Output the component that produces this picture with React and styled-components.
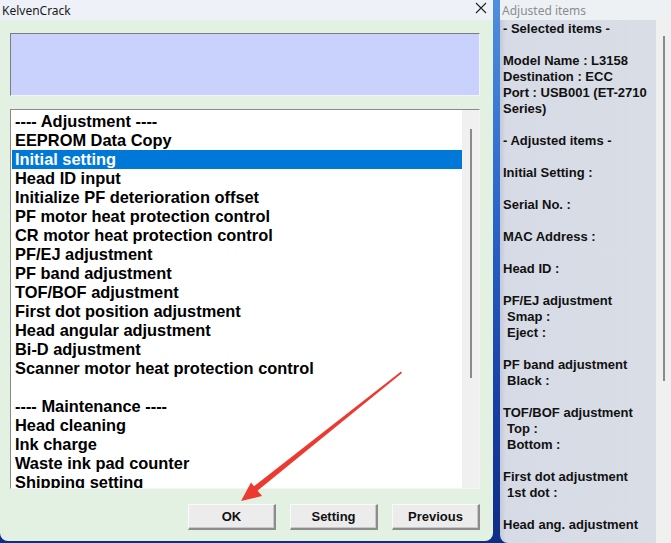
import React from 'react';
import styled, { createGlobalStyle } from 'styled-components';

const GlobalStyle = createGlobalStyle`
    html, body {
        margin: 0;
        padding: 0;
        overflow: hidden;
    }
    body {
        font-family: "Liberation Sans", Arial, sans-serif;
    }
`;

const Desktop = styled.div`
    position: relative;
    width: 671px;
    height: 543px;
    display: flex;
    overflow: hidden;
    background: linear-gradient(180deg, #4f8fdc 0%, #2a64c9 40%, #173fa3 75%, #0d2d86 100%);
`;

const Window = styled.div`
    width: 493px;
    height: 541px;
    display: flex;
    flex-direction: column;
    background-color: #e3f1e3;
    border-radius: 0 0 8px 8px;
    overflow: hidden;
`;

const TitleBar = styled.div`
    height: 20px;
    flex: none;
    display: flex;
    align-items: center;
    justify-content: space-between;
    padding: 0 6px 0 2px;
    background-color: ${p => p.$bg || '#eef2f8'};
    color: ${p => p.$color || '#1a1a1a'};
    font-family: "Noto Sans", "Liberation Sans", sans-serif;
    font-size: 12px;
`;

const CloseIcon = styled.svg`
    width: 12px;
    height: 12px;
    margin-top: -4px;
`;

const WindowBody = styled.div`
    display: flex;
    flex-direction: column;
    padding: 13px 13px 0 10px;
`;

const Display = styled.div`
    height: 61px;
    background-color: #c8d2fc;
    border-top: 1px solid #7c7c7c;
    border-left: 1px solid #7c7c7c;
    border-right: 1px solid #f4f4f4;
    border-bottom: 1px solid #f4f4f4;
`;

const ListBox = styled.div`
    margin-top: 13px;
    height: 378px;
    display: flex;
    background-color: #fff;
    border-top: 1px solid #8a8a8a;
    border-left: 1px solid #8a8a8a;
    border-right: 1px solid #f4f4f4;
    border-bottom: 1px solid #f4f4f4;
    overflow: hidden;
`;

const Items = styled.ul`
    flex: 1;
    margin: 0;
    padding: 2px 0 0 1px;
    list-style: none;
`;

const Item = styled.li`
    height: 19px;
    line-height: 19px;
    padding-left: 3px;
    font-size: 16.4px;
    font-weight: 700;
    white-space: nowrap;
    color: ${p => (p.$selected ? '#ffffff' : '#000000')};
    background-color: ${p => (p.$selected ? '#0078d7' : 'transparent')};
`;

const ScrollTrack = styled.div`
    width: 17px;
    flex: none;
    display: flex;
    justify-content: center;
    padding-top: 19px;
    background-color: #f0f0f0;
`;

const ScrollThumb = styled.div`
    width: 2px;
    height: ${p => p.$h}px;
    background-color: #8a8a8a;
`;

const ButtonRow = styled.div`
    display: flex;
    justify-content: flex-end;
    gap: 14px;
    margin-top: 15px;
`;

const Button = styled.button`
    width: 88px;
    height: 26px;
    padding: 0;
    font-family: "Liberation Sans", Arial, sans-serif;
    font-size: 13px;
    font-weight: 700;
    color: #111;
    background-color: #ececec;
    border-top: 1px solid #fafafa;
    border-left: 1px solid #fafafa;
    border-right: 2px solid #8c8c8c;
    border-bottom: 2px solid #8c8c8c;
    box-shadow: inset -1px -1px 0 #c8c8c8;
`;

const SidePane = styled.div`
    margin-left: 7px;
    flex: 1;
    display: flex;
    flex-direction: column;
`;

const SideBody = styled.div`
    flex: 1;
    display: flex;
`;

const Report = styled.div`
    width: 153px;
    padding: 1px 0 0 3px;
    background: linear-gradient(90deg, #c4c9d6 0px, #d7dbe5 6px, #d9dde6 100%);
    border-bottom-left-radius: 8px;
    font-size: 13px;
    font-weight: 700;
    line-height: 16px;
    color: #111;
`;

const ReportLine = styled.div`
    min-height: 16px;
    padding-left: ${p => (p.$indent ? '4px' : '0')};
    white-space: pre;
`;

const SideScroll = styled.div`
    flex: 1;
    display: flex;
    justify-content: center;
    padding-top: 16px;
    background-color: #f0f0f0;
`;

const Arrow = styled.svg`
    position: absolute;
    left: 0;
    top: 0;
    pointer-events: none;
`;

const listItems = [
    '---- Adjustment ----',
    'EEPROM Data Copy',
    'Initial setting',
    'Head ID input',
    'Initialize PF deterioration offset',
    'PF motor heat protection control',
    'CR motor heat protection control',
    'PF/EJ adjustment',
    'PF band adjustment',
    'TOF/BOF adjustment',
    'First dot position adjustment',
    'Head angular adjustment',
    'Bi-D adjustment',
    'Scanner motor heat protection control',
    '',
    '---- Maintenance ----',
    'Head cleaning',
    'Ink charge',
    'Waste ink pad counter',
    'Shipping setting',
];

const report = [
    ['- Selected items -'],
    [''],
    ['Model Name : L3158'],
    ['Destination : ECC'],
    ['Port : USB001 (ET-2710'],
    ['Series)'],
    [''],
    ['- Adjusted items -'],
    [''],
    ['Initial Setting :'],
    [''],
    ['Serial No. :'],
    [''],
    ['MAC Address :'],
    [''],
    ['Head ID :'],
    [''],
    ['PF/EJ adjustment'],
    ['Smap :', true],
    ['Eject :', true],
    [''],
    ['PF band adjustment'],
    ['Black :', true],
    [''],
    ['TOF/BOF adjustment'],
    ['Top :', true],
    ['Bottom :', true],
    [''],
    ['First dot adjustment'],
    ['1st dot :', true],
    [''],
    ['Head ang. adjustment'],
];

export default function App() {
    return (
        <>
            <GlobalStyle />
            <Desktop>
                <Window>
                    <TitleBar>
                        <span>KelvenCrack</span>
                        <CloseIcon viewBox="0 0 12 12">
                            <path d="M1 1 L11 11 M11 1 L1 11" stroke="#222" strokeWidth="1.1" />
                        </CloseIcon>
                    </TitleBar>
                    <WindowBody>
                        <Display />
                        <ListBox>
                            <Items>
                                {listItems.map((text, i) => (
                                    <Item key={i} $selected={text === 'Initial setting'}>
                                        {text}
                                    </Item>
                                ))}
                            </Items>
                            <ScrollTrack>
                                <ScrollThumb $h={249} />
                            </ScrollTrack>
                        </ListBox>
                        <ButtonRow>
                            <Button>OK</Button>
                            <Button>Setting</Button>
                            <Button>Previous</Button>
                        </ButtonRow>
                    </WindowBody>
                </Window>

                <SidePane>
                    <TitleBar $bg="#eef1f4" $color="#8a8d92">
                        <span>Adjusted items</span>
                    </TitleBar>
                    <SideBody>
                        <Report>
                            {report.map(([text, indent], i) => (
                                <ReportLine key={i} $indent={indent}>
                                    {text}
                                </ReportLine>
                            ))}
                        </Report>
                        <SideScroll>
                            <ScrollThumb $h={345} />
                        </SideScroll>
                    </SideBody>
                </SidePane>

                <Arrow width="671" height="543" viewBox="0 0 671 543">
                    <polygon
                        points="401,371.5 402,373 256.5,491.5 253,487"
                        fill="#ec3a30"
                    />
                    <polygon points="241,501 251,482.5 262,496" fill="#ec3a30" />
                </Arrow>
            </Desktop>
        </>
    );
}
